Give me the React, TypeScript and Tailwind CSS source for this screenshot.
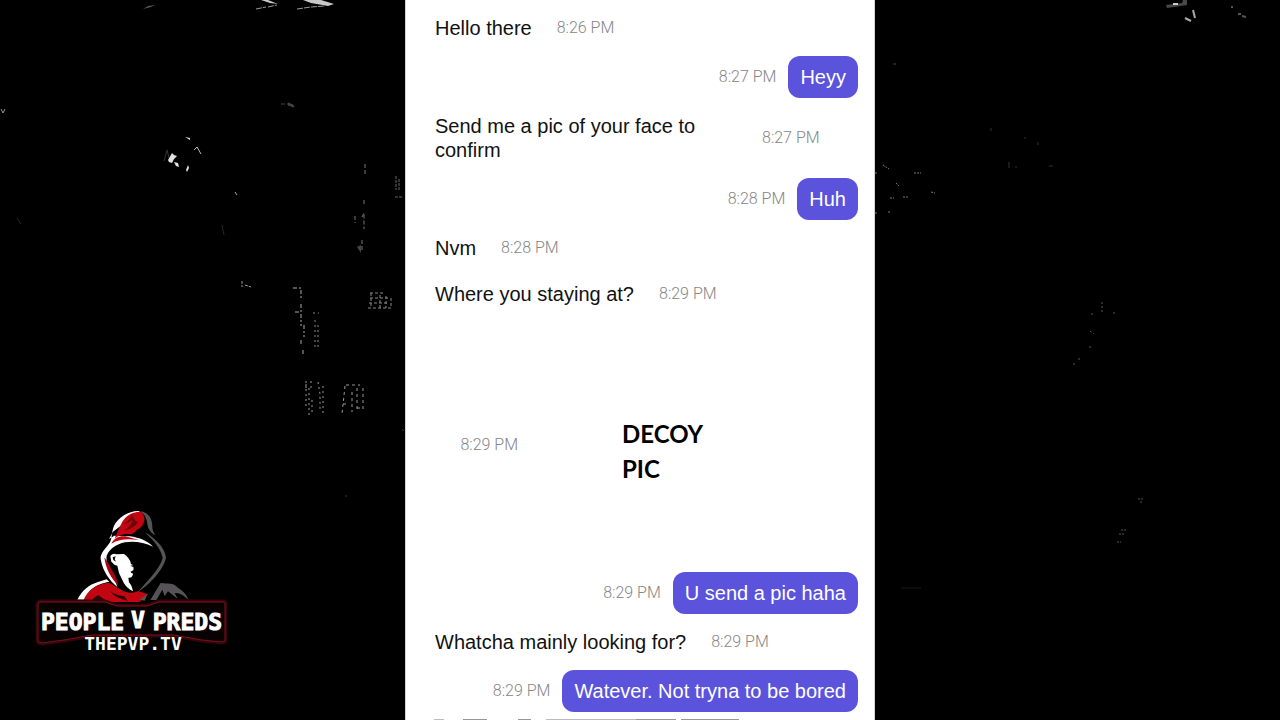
import React from "react";

type Message = {
  from: "them" | "me";
  time: string;
  text?: string;
  picture?: string;
};

const messages: Message[] = [
  { from: "them", text: "Hello there", time: "8:26 PM" },
  { from: "me", text: "Heyy", time: "8:27 PM" },
  { from: "them", text: "Send me a pic of your face to confirm", time: "8:27 PM" },
  { from: "me", text: "Huh", time: "8:28 PM" },
  { from: "them", text: "Nvm", time: "8:28 PM" },
  { from: "them", text: "Where you staying at?", time: "8:29 PM" },
  { from: "me", picture: "DECOY PIC", time: "8:29 PM" },
  { from: "me", text: "U send a pic haha", time: "8:29 PM" },
  { from: "them", text: "Whatcha mainly looking for?", time: "8:29 PM" },
  { from: "me", text: "Watever. Not tryna to be bored", time: "8:29 PM" },
];

function Time({ children }: { children: string }) {
  return (
    <time className="shrink-0 whitespace-nowrap font-['Roboto','Liberation_Sans',sans-serif] text-base font-light text-[#868686]">
      {children}
    </time>
  );
}

function Row({ message, turn }: { message: Message; turn: boolean }) {
  const gap = turn ? "mt-[7px]" : "mt-1";
  if (message.from === "them") {
    return (
      <li className={`${gap} flex items-center gap-[25px] pl-[29px]`}>
        <p className="max-w-[302px] py-[9px] text-xl leading-6 text-[#111111]">{message.text}</p>
        <Time>{message.time}</Time>
      </li>
    );
  }
  return (
    <li className={`${gap} flex items-center justify-end gap-3 pr-4`}>
      <Time>{message.time}</Time>
      {message.picture ? (
        <div className="flex h-[246px] w-[328px] items-center pl-[92px] pt-3">
          <p className="w-[90px] font-['Lato',sans-serif] text-2xl font-bold leading-[35px] text-black">
            {message.picture}
          </p>
        </div>
      ) : (
        <p className="rounded-xl bg-[#5c53dc] px-3 py-[9px] text-xl leading-6 text-white">{message.text}</p>
      )}
    </li>
  );
}

function LeftBackdrop() {
  return (
    <svg viewBox="0 0 405 720" className="w-full" fill="none" aria-hidden="true">
      <path d="M143 9l5-3 7-1-4 2z" fill="#555" />
      <path d="M261 0h7l10 4-8-1zM303 0h18l13 4-6 2-17-3z" fill="#c8c8c8" />
      <path d="M256 9l10-2M268 7l9-2M297 9l14-2 14-1" stroke="#999" strokeDasharray="6 1" />
      <path d="M1 109l2 4 2-4" stroke="#999" />
      <path d="M281 104h4M288 103l5 2 1 2-6-2z" stroke="#444" fill="#444" />
      <path d="M164 161l3-11 2 8" stroke="#333" />
      <path d="M168 160l4-7 2 2 3 1-3 3-2 4-3-1zM174 162l4 1 1 4-3-1zM186 170l2-5 1 3-2 4zM185 137l5 1v2z" fill="#e2e2e2" />
      <path d="M194 150l3-3 4 7" stroke="#bbb" />
      <path d="M235 192l2 3" stroke="#aaa" />
      <path d="M17 218l4 6M222 225l2 10" stroke="#282828" />
      <path d="M365 164v10M364 200v6M362 217l2-4v16M362 240v12M355 216v7" stroke="#777" strokeDasharray="4 2" />
      <path d="M357 247l4-2v8z" fill="#444" />
      <path d="M396 176v14M399 179v11M395 197h7" stroke="#666" strokeDasharray="3 1" />
      <path d="M242 281v6M245 285l6 2" stroke="#999" strokeDasharray="3 1" />
      <path d="M293 288h8v10M295 312h6M301 304v22M304 325v12M301 340v4M303 350v6" stroke="#aaa" strokeDasharray="4 2 2 2" />
      <path d="M313 313h6M315 320v30M318 325v25" stroke="#888" strokeDasharray="2 3" />
      <path d="M370 293h14M370 298h20M369 303h20M368 308h24M371 293v15M380 295v13M386 296v12M391 298v10" stroke="#888" strokeDasharray="3 2" />
      <path d="M305 382h9M305 387h8M309 388v28M306 384v25M318 382l2 12v16M323 386v28M312 400v14" stroke="#999" strokeDasharray="2 3" />
      <path d="M346 385h14M345 386l-3 28M352 392v20M357 388v24M363 388v22M343 404h4M357 408h6" stroke="#999" strokeDasharray="3 3" />
      <path d="M402 429l2 2M345 496h2" stroke="#333" />
    </svg>
  );
}

function RightBackdrop() {
  return (
    <svg viewBox="0 0 405 720" className="w-full" fill="none" aria-hidden="true">
      <path d="M291 5l16-2 1-3h4v5l-20 3z" fill="#484848" />
      <path d="M298 4h5" stroke="#ccc" strokeWidth="2" />
      <path d="M318 10l2 8M310 18l6 3" stroke="#aaa" strokeWidth="2" />
      <path d="M356 7h2M363 14h3M367 16l4 1" stroke="#555" strokeWidth="2" />
      <path d="M18 64h3" stroke="#444" />
      <path d="M8 165l6 4M0 173h3M39 173h7M21 183l3 3M15 198h4M28 197h5M56 192l4 1M0 213h2M13 212h3" stroke="#777" strokeDasharray="2 1" />
      <path d="M116 128v3M134 162v6M140 167h2M174 166h4M150 137v2M163 142v3" stroke="#333" />
      <path d="M227 302v10M216 314h4M238 313h2M215 331l4 3M215 346v4M204 358v4M199 363v4" stroke="#555" strokeDasharray="2 2" />
      <path d="M263 499h5M265 502h3M246 530h5M244 534h5M242 542h4" stroke="#555" strokeDasharray="2 1" />
      <path d="M26 588h20" stroke="#181818" />
    </svg>
  );
}

function Logo() {
  return (
    <svg viewBox="0 0 205 150" className="w-[205px]" role="img" aria-label="People V Preds">
      <g transform="translate(40 0) scale(.33333)">
        <path d="M210 18C180 15 145 35 132 62c-8 20-5 35-12 50-14 20-30 34-28 50 6 38 28 66 50 84l-12-33c-12-22-24-45-20-61 10-22 28-34 55-40 28-5 58 1 84 13-16-17-40-27-70-31l-46-2-16 10 12-22z" fill="#fff" />
        <path d="M214 20c-30-1-50 15-60 36-8 15-12 26-20 45 16-14 34-16 50-13 10-4 12-12 22-17 16-8 26-32 8-51z" fill="#c20510" />
        <path d="M124 116c8-16 22-24 42-22l42 11c-32-4-58-5-84 11z" fill="#c20510" />
        <path d="M186 26c-4 14-12 22-24 32 12-2 20-8 26-18-1 14-10 28-26 36 18-2 32-10 42-26-8 0-14-10-18-24z" fill="#6d0609" />
        <path d="M103 157c4 35 21 64 43 86l-9-28c-10-14-16-32-26-46z" fill="#a80710" />
        <path d="M211 19c26 3 36 25 36 45 0 13 4 18 10 27-18-8-24-22-26-39-2-17-10-25-20-33zM224 82c28 15 61 45 64 76-7 35-48 80-84 102 25-29 65-66 74-101-6-30-29-54-54-77z" fill="#555356" />
        <path d="M121 154c3-8 12-10 18-6l23-1c11 7 19 18 21 30 7 2 9 10 7 19l-6 3 5 9c-2 9-8 12-14 10l2 14c8 9 10 18 12 27-12-7-21-14-28-26l-14-29-5-22c-7 0-13-7-18-12z" fill="#fff" />
        <path d="M128 157l9-3-3 8 4 8-8-5zM181 182l13-2-3 7zM182 199l9 2-7 4z" fill="#050505" />
        <path d="M22 284c15-29 35-45 62-53l26-8 8 7c-43 9-57 20-73 54z" fill="#fff" />
        <path d="M40 287c12-32 37-49 77-54l38 22c16 11 33 10 50 3l29 10-25 23H40z" fill="#c20510" />
        <path d="M66 287c4-8 10-14 20-17 2 5 12 8 22 17zM119 258c14 10 30 14 44 16l10 13c-22-4-42-14-54-29z" fill="#2b0508" />
        <path d="M241 285l31-51c24 4 36-2 49 12 16 12 28 19 34 38-15-14-27-22-41-20l9 17-29-22-10 15-7-20-18 31zM209 284l24-18-9 21z" fill="#555356" />
      </g>
      <path d="M11 97h64l12 4h30l12-4h64q2 0 2 2v35q0 3-3 3l-20-2-28-5H62l-28 5-22 3q-4 0-4-4v-34q0-3 3-3z" fill="#080203" stroke="#33060a" strokeWidth="5" strokeLinejoin="round" />
      <path d="M11 97h64l12 4h30l12-4h64q2 0 2 2v35q0 3-3 3l-20-2-28-5H62l-28 5-22 3q-4 0-4-4v-34q0-3 3-3z" fill="#080203" stroke="#81101b" strokeLinejoin="round" />
      <g fill="#fff" stroke="#fff" strokeWidth="1" fontFamily="'DejaVu Sans Mono',monospace" fontWeight="700" fontSize="23">
        <text x="11" y="125">PEOPLE</text>
        <text x="108" y="123" textAnchor="middle">V</text>
        <text x="192" y="125" textAnchor="end">PREDS</text>
      </g>
      <text x="103" y="145" textAnchor="middle" fill="#fff" fontFamily="'DejaVu Sans Mono',monospace" fontWeight="700" fontSize="18">
        THEPVP.TV
      </text>
    </svg>
  );
}

export default function App() {
  return (
    <div className="grid min-h-screen grid-cols-[minmax(0,1fr)_470px_minmax(0,1fr)] overflow-hidden bg-black">
      <aside className="relative">
        <LeftBackdrop />
        <div className="absolute bottom-[65px] left-[30px]">
          <Logo />
        </div>
      </aside>
      <main className="flex flex-col justify-between border-x border-[#d4d4d4] bg-white font-['Liberation_Sans',Arial,sans-serif]">
        <ol className="flex flex-col">
          {messages.map((message, i) => (
            <Row key={i} message={message} turn={i === 0 || messages[i - 1].from !== message.from} />
          ))}
        </ol>
        <svg viewBox="0 0 468 2" className="w-full" aria-hidden="true">
          <path d="M28 1h10v1H28zM140 1h90v1h-90z" fill="#bbb" />
          <path d="M57 1h24v1H57zM112 1h13v1h-13zM275 1h58v1h-58z" fill="#9a9696" />
          <path d="M230 1h40v1h-40z" fill="#999" />
        </svg>
      </main>
      <aside>
        <RightBackdrop />
      </aside>
    </div>
  );
}
